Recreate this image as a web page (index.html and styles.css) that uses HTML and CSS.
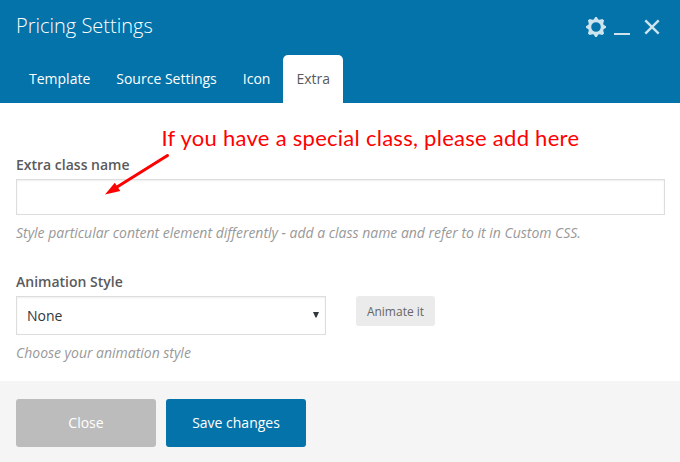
FILE: index.html
```html
<!DOCTYPE html>
<html lang="en">
<head>
<meta charset="utf-8">
<title>Pricing Settings</title>
<link rel="stylesheet" href="styles.css">
</head>
<body>
<div class="panel">
  <header class="header">
    <div class="title-row">
      <h1 class="title">Pricing Settings</h1>
      <div class="controls">
        <svg class="gear" viewBox="0 0 20 20" width="20" height="20"><path fill-rule="evenodd" d="M9.200 0h1.600l1.500 2.400 1.100.4 3-.9 1.700 1.700-.9 3 .4 1.100L20 9.200v1.600l-2.400 1.500-.4 1.100.9 3-1.700 1.700-3-.9-1.100.4L10.800 20H9.200l-1.500-2.400-1.100-.4-3 .9-1.700-1.700.9-3-.4-1.100L0 10.800V9.200l2.400-1.500.4-1.100-.9-3 1.700-1.700 3 .9 1.100-.4zM10 5.200a4.800 4.800 0 1 0 0 9.600 4.800 4.800 0 0 0 0-9.600z"/></svg>
        <svg class="minimize" viewBox="0 0 16 2" width="16" height="2"><path d="M0 0h16v2H0z"/></svg>
        <svg class="close-icon" viewBox="0 0 16 16" width="16" height="16"><path d="m1.300 1.300 13.400 13.400M14.700 1.300 1.300 14.700"/></svg>
      </div>
    </div>
    <nav class="tabs">
      <a class="tab">Template</a>
      <a class="tab">Source Settings</a>
      <a class="tab">Icon</a>
      <a class="tab active">Extra</a>
    </nav>
  </header>
  <main class="content">
    <label class="label" for="extra-class">Extra class name</label>
    <input class="field" id="extra-class" type="text">
    <p class="hint">Style particular content element differently - add a class name and refer to it in Custom CSS.</p>
    <div class="label second">Animation Style</div>
    <div class="animation">
      <div class="select"><span>None</span><svg viewBox="0 0 6 6" width="6" height="6"><path d="M0 0h6L3.500 5.500h-1z"/></svg></div>
      <button class="animate">Animate it</button>
    </div>
    <p class="hint">Choose your animation style</p>
  </main>
  <footer class="footer">
    <button class="button">Close</button>
    <button class="button primary">Save changes</button>
  </footer>
  <svg class="note" viewBox="0 0 440 80" width="440" height="80">
    <text x="61.500" y="26" textLength="417.500" lengthAdjust="spacing">If you have a special class, please add here</text>
    <path class="shaft" d="M67.500 35.500 17 67"/>
    <path class="head" d="M5 74.500 14.800 62.800 20.300 71z"/>
  </svg>
</div>
</body>
</html>
```
FILE: styles.css
```css
* { box-sizing: border-box; }
body { margin: 0; font-family: "Open Sans", sans-serif; font-size: 14px; color: #5a5a5a; background: #fff; }
.panel { position: relative; height: 462px; overflow: hidden; display: flex; flex-direction: column; }
.header { height: 103px; background: #0473aa; display: flex; flex-direction: column; justify-content: space-between; }
.title-row { display: flex; justify-content: space-between; padding: 12px 20px 0 16px; }
.title { margin: 0; font-size: 20px; line-height: 28px; font-weight: 300; color: #fff; }
.controls { display: flex; align-items: flex-start; padding-top: 5px; fill: #cde3ee; }
.minimize { margin: 16px 14px 0 8px; }
.close-icon { margin-top: 2px; stroke: #cde3ee; stroke-width: 2.4; }
.tabs { display: flex; padding-left: 16px; }
.tab { height: 48px; line-height: 48px; padding: 0 13px; color: #fff; font-weight: 500; }
.tab.active { width: 60px; background: #fff; color: #5a5a5a; border-radius: 5px 5px 0 0; font-weight: 400; }
.content { flex: 1; padding: 52px 15px 0 16px; }
.label { display: block; height: 24px; line-height: 20px; font-weight: 600; }
.field { display: block; width: 100%; height: 36px; border: 1px solid #ddd; padding: 6px 10px; box-shadow: inset 0 1px 2px rgba(0,0,0,.07); outline: 0; }
.hint { margin: 8px 0 0; line-height: 20px; font-style: italic; color: #999; letter-spacing: -.015px; }
.second { margin-top: 29px; }
.animation { display: flex; gap: 30px; align-items: flex-start; }
.select { width: 310px; height: 39px; border: 1px solid #ddd; padding: 0 6px 0 10px; box-shadow: inset 0 1px 2px rgba(0,0,0,.07); display: flex; align-items: center; justify-content: space-between; color: #32373c; }
.select svg { margin-top: -2px; fill: #32373c; }
.animate { width: 79px; height: 30px; border: 0; border-radius: 3px; background: #ebebeb; color: #666; font: 12px "Open Sans", sans-serif; padding: 0; }
.footer { height: 81px; background: #f5f5f5; padding: 18px 16px; display: flex; gap: 10px; }
.button { width: 140px; height: 48px; border: 0; border-radius: 3px; background: #bcbcbc; color: #fff; font: 14px "Open Sans", sans-serif; padding: 0 0 1px; }
.primary { background: #0473aa; font-weight: 500; }
.note { position: absolute; left: 100px; top: 120px; overflow: visible; pointer-events: none; }
.note text { font: 22px Lato, sans-serif; fill: #f00; }
.shaft { stroke: #f00; stroke-width: 3; stroke-linecap: round; }
.head { fill: #f00; }
```
